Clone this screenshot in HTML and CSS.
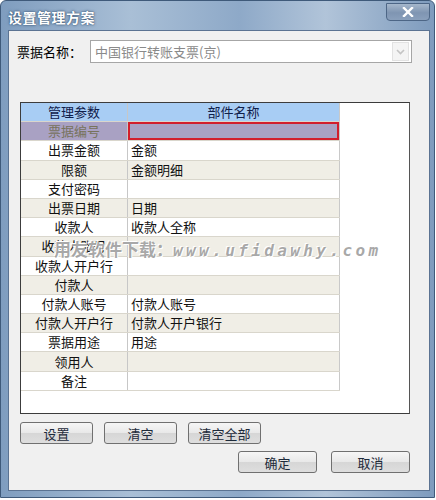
FILE: index.html
```html
<!DOCTYPE html>
<html lang="zh-CN">
<head>
    <meta charset="UTF-8">
    <title>设置管理方案</title>
    <link rel="stylesheet" href="styles.css">
</head>
<body>
    <div class="window">
        <div class="titlebar">
            <span class="title">设置管理方案</span>
            <button class="close-btn">
                <svg width="14" height="10" viewBox="0 0 14 10"><path d="M3 1 L11 9 M11 1 L3 9" stroke="#fff" stroke-width="2.4" stroke-linecap="square"/></svg>
            </button>
        </div>
        <div class="content">
            <div class="field">
                <label class="field-label">票据名称：</label>
                <div class="combo">
                    <span class="combo-text">中国银行转账支票(京)</span>
                    <span class="combo-arrow">
                        <svg width="9" height="6" viewBox="0 0 9 6"><path d="M1 1 L4.5 4.5 L8 1" fill="none" stroke="#c4c4c4" stroke-width="1.6"/></svg>
                    </span>
                </div>
            </div>
            <div class="grid-box">
                <table class="grid">
                    <thead>
                        <tr><th class="c1">管理参数</th><th class="c2">部件名称</th></tr>
                    </thead>
                    <tbody>
                        <tr class="selected"><td class="c1">票据编号</td><td class="c2 focus"></td></tr>
                        <tr><td class="c1">出票金额</td><td class="c2">金额</td></tr>
                        <tr class="alt"><td class="c1">限额</td><td class="c2">金额明细</td></tr>
                        <tr><td class="c1">支付密码</td><td class="c2"></td></tr>
                        <tr class="alt"><td class="c1">出票日期</td><td class="c2">日期</td></tr>
                        <tr><td class="c1">收款人</td><td class="c2">收款人全称</td></tr>
                        <tr class="alt"><td class="c1">收款人账号</td><td class="c2"></td></tr>
                        <tr><td class="c1">收款人开户行</td><td class="c2"></td></tr>
                        <tr class="alt"><td class="c1">付款人</td><td class="c2"></td></tr>
                        <tr><td class="c1">付款人账号</td><td class="c2">付款人账号</td></tr>
                        <tr class="alt"><td class="c1">付款人开户行</td><td class="c2">付款人开户银行</td></tr>
                        <tr><td class="c1">票据用途</td><td class="c2">用途</td></tr>
                        <tr class="alt"><td class="c1">领用人</td><td class="c2"></td></tr>
                        <tr><td class="c1">备注</td><td class="c2"></td></tr>
                    </tbody>
                </table>
                <div class="watermark">用友软件下载：<span class="wm-url">www.ufidawhy.com</span></div>
            </div>
            <div class="actions">
                <button class="btn">设置</button>
                <button class="btn">清空</button>
                <button class="btn">清空全部</button>
            </div>
            <div class="actions right">
                <button class="btn wide">确定</button>
                <button class="btn wide">取消</button>
            </div>
        </div>
    </div>
</body>
</html>
```

FILE: styles.css
```css
body {
    margin: 0;
    background: #fff;
    font-family: "Noto Sans CJK SC", "Liberation Sans", sans-serif;
    font-size: 13px;
    color: #111;
}
.window {
    width: 422px;
    height: 490px;
    padding: 0 4px 6px 7px;
    border: 1px solid #3f5a7a;
    border-radius: 6px 6px 0 0;
    background: linear-gradient(90deg, #7f9dbf 0%, #a9bfd6 30%, #8ea9c8 55%, #b1c4d9 75%, #7e9bbd 100%);
    display: flex;
    flex-direction: column;
}
.titlebar {
    height: 29px;
    display: flex;
    justify-content: space-between;
    align-items: flex-start;
}
.title {
    margin-top: 6px;
    color: #fff;
    font-weight: bold;
    font-size: 14px;
    letter-spacing: 0.5px;
    text-shadow: 0 0 3px #33506f, 0 0 1px #33506f;
}
.close-btn {
    margin-top: 2px;
    margin-right: 0;
    width: 44px;
    height: 18px;
    border: 1px solid #4d6686;
    border-radius: 0 0 4px 4px;
    background: linear-gradient(#a5b7cc, #7f95b2 55%, #8aa0bc);
    display: flex;
    align-items: center;
    justify-content: center;
    padding: 0;
}
.content {
    flex: 1;
    background: #f0f0f0;
    border: 1px solid #5b7392;
    padding: 9px 0 0 0;
}
.field {
    display: flex;
    align-items: center;
    height: 23px;
}
.field-label {
    margin-left: 8px;
    width: 73px;
    color: #000;
}
.combo {
    width: 320px;
    height: 21px;
    border: 1px solid #a6a6a6;
    background: #fff;
    display: flex;
    align-items: center;
    justify-content: space-between;
}
.combo-text {
    margin-left: 4px;
    color: #8a8a8a;
}
.combo-arrow {
    width: 15px;
    height: 17px;
    margin-right: 2px;
    border: 1px solid #e2e2e2;
    background: #f4f4f4;
    display: flex;
    align-items: center;
    justify-content: center;
}
.grid-box {
    position: relative;
    margin: 39px 0 0 11px;
    width: 388px;
    height: 310px;
    border: 1px solid #3c3c3c;
    border-right-color: #555;
    background: #fff;
}
.grid {
    border-collapse: collapse;
    table-layout: fixed;
    width: 319px;
}
.grid th,
.grid td {
    height: 18.2px;
    padding: 0;
    line-height: 18px;
    border-bottom: 1px solid #d9d6cc;
    white-space: nowrap;
    overflow: hidden;
}
.grid .c1 {
    width: 106px;
    text-align: center;
    border-right: 1px solid #c7c7c7;
}
.grid .c2 {
    text-align: left;
    padding-left: 3px;
    border-right: 1px solid #c9c9c9;
}
.grid th {
    background: #a8cdf4;
    font-weight: normal;
    color: #10204a;
}
.grid th.c2 {
    text-align: center;
    padding-left: 0;
}
.grid tr.alt td {
    background: #f0eee6;
}
.grid tr.selected td {
    background: #a9a1c3;
    color: #77735c;
}
.grid td.focus {
    box-shadow: inset 0 0 0 2px #d21e2c;
}
.watermark {
    position: absolute;
    left: 33px;
    top: 133px;
    font-size: 17px;
    font-weight: bold;
    color: rgba(140, 140, 140, 0.75);
    text-shadow: 1px 1px 0 #fff, -1px -1px 0 #fff;
    white-space: nowrap;
    pointer-events: none;
}
.wm-url {
    font-family: "DejaVu Sans Mono", monospace;
    font-size: 16px;
    font-style: italic;
    letter-spacing: 3.4px;
}
.actions {
    display: flex;
    gap: 11px;
    margin: 8px 0 0 11px;
}
.actions.right {
    justify-content: flex-end;
    gap: 14px;
    margin: 7px 19px 0 0;
}
.btn {
    width: 73px;
    height: 22px;
    padding: 0;
    border: 1px solid #707070;
    border-radius: 3px;
    background: linear-gradient(#f6f6f6 0%, #e8e8e8 50%, #d6d6d6 51%, #dedede 100%);
    font-family: "Noto Sans CJK SC", "Liberation Sans", sans-serif;
    font-size: 13px;
    color: #1d2a3a;
}
.btn.wide {
    width: 79px;
}
```
